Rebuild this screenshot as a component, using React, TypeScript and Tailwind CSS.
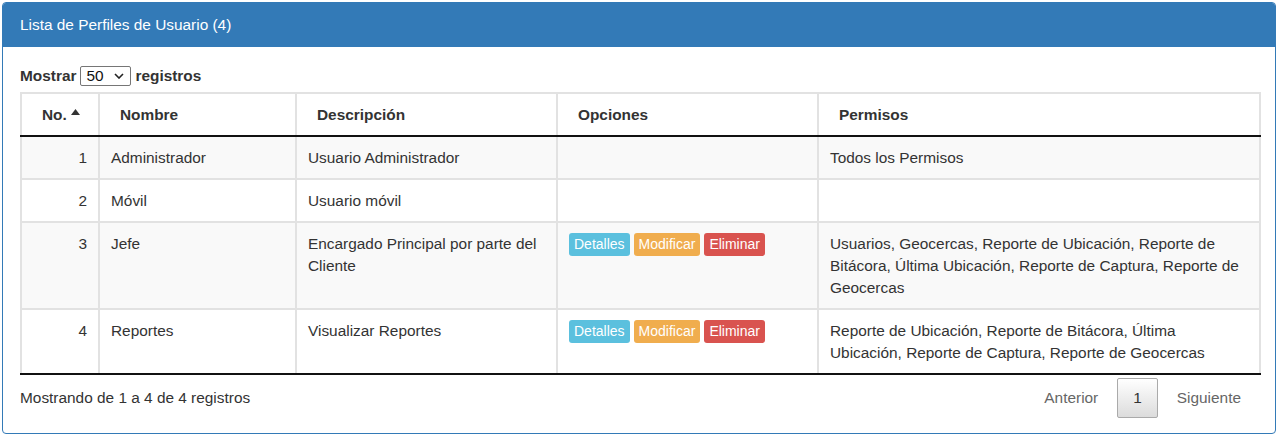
import React from "react";

type Perfil = {
  id: number;
  nombre: string;
  descripcion: string;
  opciones: boolean;
  permisos: string;
};

const perfiles: Perfil[] = [
  { id: 1, nombre: "Administrador", descripcion: "Usuario Administrador", opciones: false, permisos: "Todos los Permisos" },
  { id: 2, nombre: "Móvil", descripcion: "Usuario móvil", opciones: false, permisos: "" },
  {
    id: 3,
    nombre: "Jefe",
    descripcion: "Encargado Principal por parte del Cliente",
    opciones: true,
    permisos:
      "Usuarios, Geocercas, Reporte de Ubicación, Reporte de Bitácora, Última Ubicación, Reporte de Captura, Reporte de Geocercas",
  },
  {
    id: 4,
    nombre: "Reportes",
    descripcion: "Visualizar Reportes",
    opciones: true,
    permisos: "Reporte de Ubicación, Reporte de Bitácora, Última Ubicación, Reporte de Captura, Reporte de Geocercas",
  },
];

function SortUp() {
  return (
    <svg width="9" height="6" viewBox="0 0 9 6" className="ml-[4px] inline-block align-[5px]">
      <path d="M0 6 L4.5 0 L9 6 Z" fill="#333" />
    </svg>
  );
}

function Opciones() {
  return (
    <div className="flex gap-[4px]">
      <span className="rounded-[3px] bg-[#5bc0de] px-[5px] text-[14px] leading-[23px] text-white">Detalles</span>
      <span className="rounded-[3px] bg-[#f0ad4e] px-[5px] text-[14px] leading-[23px] text-white">Modificar</span>
      <span className="rounded-[3px] bg-[#d9534f] px-[5px] text-[14px] leading-[23px] text-white">Eliminar</span>
    </div>
  );
}

export default function App() {
  const th =
    "whitespace-nowrap border-x-2 border-t-2 border-[#e2e2e2] border-b-2 border-b-[#111] pl-[20px] pr-[8px] pt-[10px] pb-[9px] text-left font-bold";
  const td = "border-2 border-[#e2e2e2] px-[11px] pt-[10px] pb-[9px] align-top";
  const last = perfiles.length - 1;

  return (
    <div className="p-[2px] font-['Liberation_Sans',Arial,sans-serif] text-[15.4px] leading-[22px] text-[#333]">
      <div className="h-[432px] overflow-hidden rounded-[4px] border border-[#337ab7] bg-white">
        <div className="bg-[#337ab7] px-[17px] py-[11px] text-white">Lista de Perfiles de Usuario (4)</div>
        <div className="px-[17px] pt-[18px]">
          <div className="flex items-center gap-[4px] font-bold">
            <span>Mostrar</span>
            <div className="flex h-[20px] w-[51px] items-center justify-between rounded-[2px] border border-[#767676] pl-[5px] pr-[6px] font-normal text-[#111]">
              <span className="leading-none">50</span>
              <svg width="10" height="6" viewBox="0 0 10 6">
                <path d="M1 1 L5 5 L9 1" fill="none" stroke="#222" strokeWidth="1.6" />
              </svg>
            </div>
            <span>registros</span>
          </div>

          <table className="mt-[5px] w-[1239px] table-fixed border-collapse">
            <colgroup>
              <col className="w-[78px]" />
              <col className="w-[197px]" />
              <col className="w-[261px]" />
              <col className="w-[261px]" />
              <col className="w-[442px]" />
            </colgroup>
            <thead>
              <tr>
                <th className={th}>
                  No.
                  <SortUp />
                </th>
                <th className={th}>Nombre</th>
                <th className={th}>Descripción</th>
                <th className={th}>Opciones</th>
                <th className={th}>Permisos</th>
              </tr>
            </thead>
            <tbody>
              {perfiles.map((p, i) => {
                const c = i === last ? td + " border-b-[#111] pb-[8px]" : td;
                return (
                  <tr key={p.id} className={i % 2 === 0 ? "bg-[#f9f9f9]" : "bg-white"}>
                    <td className={c + " text-right"}>{p.id}</td>
                    <td className={c}>{p.nombre}</td>
                    <td className={c}>{p.descripcion}</td>
                    <td className={c}>{p.opciones ? <Opciones /> : null}</td>
                    <td className={c}>{p.permisos}</td>
                  </tr>
                );
              })}
            </tbody>
          </table>

          <div className="flex w-[1239px] items-center justify-between pt-[3px]">
            <span>Mostrando de 1 a 4 de 4 registros</span>
            <div className="flex items-center gap-[4px] pr-[3px]">
              <span className="px-[15px] py-[8px] text-[#666]">Anterior</span>
              <span className="rounded-[2px] border border-[#aaa] bg-gradient-to-b from-white to-[#dcdcdc] px-[15px] py-[8px]">
                1
              </span>
              <span className="px-[15px] py-[8px] text-[#666]">Siguiente</span>
            </div>
          </div>
        </div>
      </div>
    </div>
  );
}
